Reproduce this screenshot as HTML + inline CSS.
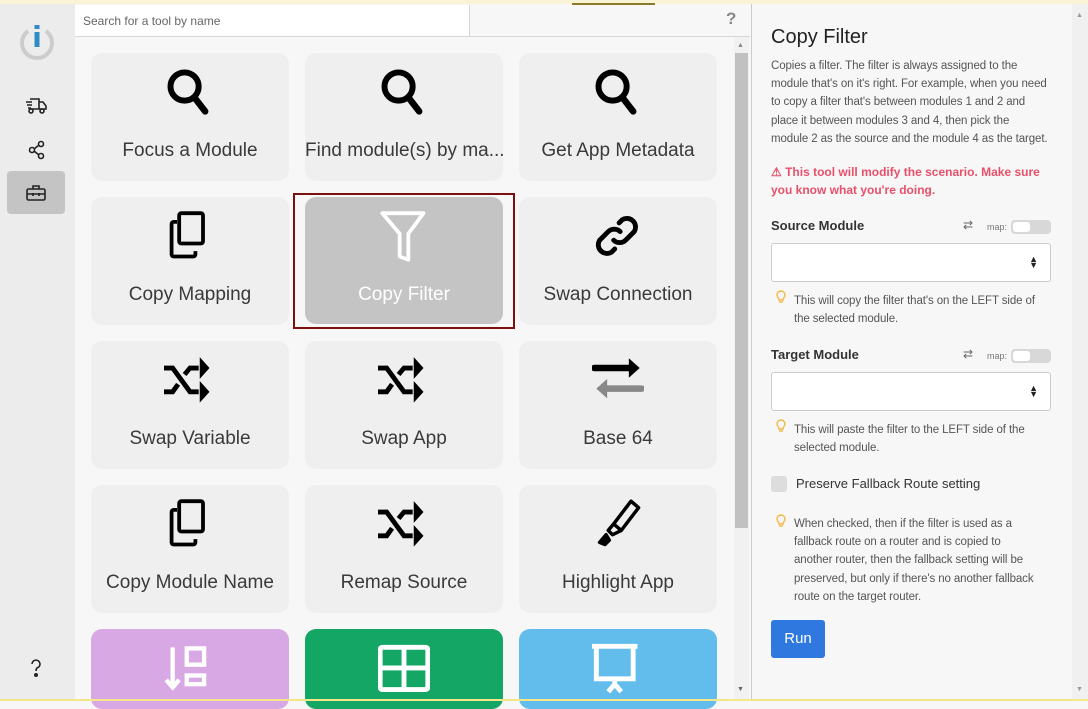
<!DOCTYPE html>
<html><head><meta charset="utf-8"><style>
*{box-sizing:border-box;margin:0;padding:0}
body{width:1088px;height:701px;overflow:hidden;background:#f7f7f7;font-family:"Liberation Sans",sans-serif;position:relative}
.topline{position:absolute;left:0;top:0;width:1088px;height:4px;background:#fbf3d6}
.botline{position:absolute;left:0;top:699px;width:1088px;height:2px;background:#f5e68a}
.side{position:absolute;left:0;top:4px;width:75px;height:695px;background:#ececec}
.main{position:absolute;left:75px;top:4px;width:675px;height:695px;background:#f7f7f7}
.search{position:absolute;left:75px;top:5px;width:395px;height:32px;background:#fff;border-bottom:1px solid #d6d6d6;border-right:1px solid #d6d6d6;font-size:12px;color:#666;padding:9px 8px}
.search2{position:absolute;left:470px;top:5px;width:280px;height:32px;border-bottom:1px solid #d6d6d6}
.card{position:absolute;width:198px;height:128px;background:#efefef;border-radius:11px;text-align:center;overflow:hidden}
.card svg{position:absolute;left:73px;top:14px}
.card span{position:absolute;left:0;right:0;top:87px;font-size:19px;color:#3a3a3a;white-space:nowrap;overflow:hidden}
.right{position:absolute;left:751px;top:4px;width:321px;height:695px;background:#f7f7f7;border-left:1px solid #ccc}
.rscroll{position:absolute;left:1072px;top:4px;width:16px;height:695px;background:#f0f0f0}
.r{position:absolute;left:771px;font-size:11.5px;line-height:18.2px;color:#555;letter-spacing:-0.1px;white-space:nowrap}
h1{position:absolute;left:771px;top:26px;font-size:20px;font-weight:normal;color:#222}
.lbl{position:absolute;left:771px;font-size:13px;font-weight:bold;color:#333}
.sel{position:absolute;left:771px;width:280px;height:39px;background:#fff;border:1px solid #ccc;border-radius:3px}
.sel i{position:absolute;right:12px;top:12px;font-style:normal;font-size:9px;line-height:6px;color:#222}
.map{position:absolute;left:987px;font-size:9px;color:#777}
.tog{position:absolute;left:1011px;width:40px;height:14px;background:#d8d8d8;border-radius:4px}
.tog:after{content:"";position:absolute;left:2px;top:2px;width:17px;height:10px;background:#fff;border-radius:3px}
.bulb{position:absolute;left:776px}
</style></head><body>
<div class="topline"></div>
<div class="side"></div>
<svg style="position:absolute;left:18px;top:23px" width="38" height="38" viewBox="0 0 38 38"><path d="M10 8 A15 15 0 1 0 28 8" fill="none" stroke="#ccc" stroke-width="4"/><rect x="16.5" y="2" width="5" height="4" fill="#2f8bc6"/><rect x="16.5" y="9" width="5" height="15" fill="#2f8bc6"/></svg>
<svg style="position:absolute;left:25px;top:96px" width="22" height="20" viewBox="0 0 22 20" fill="none" stroke="#222" stroke-width="1.6"><path d="M5 3h9v10H5M14 6h4l3 4v3h-7M1 6h6M2 9h5M3 12h3"/><circle cx="6" cy="15" r="2"/><circle cx="17" cy="15" r="2"/></svg>
<svg style="position:absolute;left:28px;top:140px" width="18" height="20" viewBox="0 0 18 20" fill="none" stroke="#222" stroke-width="1.6"><circle cx="4" cy="10" r="2.5"/><circle cx="13" cy="4" r="2.5"/><circle cx="13" cy="16" r="2.5"/><path d="M6 9l5-4M6 11l5 4"/></svg>
<div style="position:absolute;left:7px;top:171px;width:58px;height:43px;background:#c4c4c4;border-radius:4px"></div>
<svg style="position:absolute;left:26px;top:184px" width="20" height="18" viewBox="0 0 20 18" fill="none" stroke="#222" stroke-width="1.6"><rect x="1" y="5" width="18" height="11" rx="1.5"/><path d="M7 5V2h6v3M1 10h18M7 9v3M13 9v3"/></svg>
<svg style="position:absolute;left:28px;top:658px" width="16" height="20" viewBox="0 0 16 20" fill="none" stroke="#222" stroke-width="1.6"><path d="M4 6a4 4 0 1 1 5 4c-1 1-1 2-1 3"/><circle cx="8" cy="17" r="1.2" fill="#222"/></svg>

<div class="main"></div>
<div style="position:absolute;left:572px;top:3px;width:83px;height:2px;background:#8a7a2a"></div>
<div class="search">Search for a tool by name</div>
<div class="search2"></div>
<div style="position:absolute;left:726px;top:9px;font-size:17px;font-weight:bold;color:#888">?</div>
<div style="position:absolute;left:734px;top:37px;width:15px;height:662px;background:#f1f1f1"></div>
<div style="position:absolute;left:735px;top:53px;width:13px;height:475px;background:#c1c1c1"></div>
<div style="position:absolute;left:737px;top:42px;font-size:7px;color:#888">▲</div>
<div style="position:absolute;left:737px;top:686px;font-size:7px;color:#666">▼</div>

<div class="card" style="left:91px;top:53px"><svg width="52" height="52" viewBox="0 0 48 48"><circle cx="19" cy="18" r="13" fill="none" stroke="#000" stroke-width="5.5"/><path d="M28 28l10 13" stroke="#000" stroke-width="6" stroke-linecap="round"/></svg><span>Focus a Module</span></div>
<div class="card" style="left:305px;top:53px"><svg width="52" height="52" viewBox="0 0 48 48"><circle cx="19" cy="18" r="13" fill="none" stroke="#000" stroke-width="5.5"/><path d="M28 28l10 13" stroke="#000" stroke-width="6" stroke-linecap="round"/></svg><span>Find module(s) by ma...</span></div>
<div class="card" style="left:519px;top:53px"><svg width="52" height="52" viewBox="0 0 48 48"><circle cx="19" cy="18" r="13" fill="none" stroke="#000" stroke-width="5.5"/><path d="M28 28l10 13" stroke="#000" stroke-width="6" stroke-linecap="round"/></svg><span>Get App Metadata</span></div>

<div class="card" style="left:91px;top:197px"><svg width="52" height="52" viewBox="0 0 48 48" fill="none" stroke="#000" stroke-width="3.5"><rect x="14" y="2" width="22" height="28" rx="2"/><path d="M12 10h-3a2 2 0 0 0-2 2v28a2 2 0 0 0 2 2h18a2 2 0 0 0 2-2v-3"/></svg><span>Copy Mapping</span></div>
<div style="position:absolute;left:293px;top:193px;width:222px;height:136px;border:2px solid #7a1010"></div>
<div class="card" style="left:305px;top:197px;background:#c4c4c4;height:127px"><svg width="52" height="52" viewBox="0 0 48 48" fill="none" stroke="#fff" stroke-width="3.5" stroke-linejoin="round"><path d="M4 2h38l-14 19v24l-8-3V21z"/></svg><span style="color:#fff">Copy Filter</span></div>
<div class="card" style="left:519px;top:197px"><svg width="52" height="52" viewBox="0 0 48 48" fill="none" stroke="#000" stroke-width="4.5" stroke-linecap="round"><path d="M20 27a8 8 0 0 0 11 0l8-8a8 8 0 0 0-11-11l-3 3"/><path d="M26 19a8 8 0 0 0-11 0l-8 8a8 8 0 0 0 11 11l3-3"/></svg><span>Swap Connection</span></div>

<div class="card" style="left:91px;top:341px"><svg width="52" height="52" viewBox="0 0 48 48"><g fill="none" stroke="#000" stroke-width="4.5"><path d="M0 12h8l16 22h8M0 34h8l5-7M19 18l5-6h8"/></g><path d="M33 2l9 10-9 10zM33 24l9 10-9 10z" fill="#000"/></svg><span>Swap Variable</span></div>
<div class="card" style="left:305px;top:341px"><svg width="52" height="52" viewBox="0 0 48 48"><g fill="none" stroke="#000" stroke-width="4.5"><path d="M0 12h8l16 22h8M0 34h8l5-7M19 18l5-6h8"/></g><path d="M33 2l9 10-9 10zM33 24l9 10-9 10z" fill="#000"/></svg><span>Swap App</span></div>
<div class="card" style="left:519px;top:341px"><svg width="52" height="52" viewBox="0 0 48 48"><path d="M2 12h34" stroke="#000" stroke-width="6" stroke-linecap="round"/><path d="M34 3l10 9-10 9z" fill="#000"/><path d="M12 31h34" stroke="#888" stroke-width="6" stroke-linecap="round"/><path d="M14 22L4 31l10 9z" fill="#888"/></svg><span>Base 64</span></div>

<div class="card" style="left:91px;top:485px"><svg width="52" height="52" viewBox="0 0 48 48" fill="none" stroke="#000" stroke-width="3.5"><rect x="14" y="2" width="22" height="28" rx="2"/><path d="M12 10h-3a2 2 0 0 0-2 2v28a2 2 0 0 0 2 2h18a2 2 0 0 0 2-2v-3"/></svg><span>Copy Module Name</span></div>
<div class="card" style="left:305px;top:485px"><svg width="52" height="52" viewBox="0 0 48 48"><g fill="none" stroke="#000" stroke-width="4.5"><path d="M0 12h8l16 22h8M0 34h8l5-7M19 18l5-6h8"/></g><path d="M33 2l9 10-9 10zM33 24l9 10-9 10z" fill="#000"/></svg><span>Remap Source</span></div>
<div class="card" style="left:519px;top:485px"><svg width="52" height="52" viewBox="0 0 48 48" fill="none" stroke="#000" stroke-width="3.2" stroke-linejoin="round"><path d="M36 2l7 6-16 21-7-6z"/><path d="M20 23l-5 6 4 4 8-4"/><path d="M13 33l-6 7 5 2 4-4z" fill="#000"/></svg><span>Highlight App</span></div>

<div class="card" style="left:91px;top:629px;background:#d8a8e4;height:80px"><svg width="52" height="52" viewBox="0 0 48 48" fill="none" stroke="#fff" stroke-width="4"><path d="M8 4v36M2 34l6 7 6-7"/><rect x="21" y="5" width="16" height="15"/><rect x="21" y="30" width="16" height="8"/></svg></div>
<div class="card" style="left:305px;top:629px;background:#13a664;height:80px"><svg width="52" height="52" viewBox="0 0 48 48" fill="none" stroke="#fff" stroke-width="4.5"><rect x="2" y="4" width="44" height="39" rx="2"/><path d="M24 4v39M2 23h44"/></svg></div>
<div class="card" style="left:519px;top:629px;background:#63bdec;height:80px"><svg width="52" height="52" viewBox="0 0 48 48" fill="none" stroke="#fff" stroke-width="4.5"><path d="M0 3h42M4 3v30h34V3M21 33v5l-6 7M21 38l6 7"/></svg></div>

<div class="right"></div>
<div class="rscroll"><div style="position:absolute;left:4px;top:8px;font-size:7px;color:#999">▲</div><div style="position:absolute;left:4px;top:682px;font-size:7px;color:#999">▼</div></div>
<h1>Copy Filter</h1>
<div class="r" style="top:57px">Copies a filter. The filter is always assigned to the<br>module that's on it's right. For example, when you need<br>to copy a filter that's between modules 1 and 2 and<br>place it between modules 3 and 4, then pick the<br>module 2 as the source and the module 4 as the target.</div>
<div class="r" style="top:163px;font-size:12px;font-weight:bold;color:#e8506a;letter-spacing:0">⚠ This tool will modify the scenario. Make sure<br>you know what you're doing.</div>
<div class="lbl" style="top:218px">Source Module</div>
<div style="position:absolute;left:963px;top:218px;font-size:12px;color:#666">⇄</div>
<div class="map" style="top:222px">map:</div><div class="tog" style="top:220px"></div>
<div class="sel" style="top:243px"><i>▲<br>▼</i></div>
<svg class="bulb" style="top:290px" width="10" height="14" viewBox="0 0 10 14" fill="none" stroke="#f3b846" stroke-width="1.4"><path d="M3 10C3 8 1 7 1 5a4 4 0 0 1 8 0c0 2-2 3-2 5z"/><path d="M3 12h4"/></svg>
<div class="r" style="left:794px;top:292px">This will copy the filter that's on the LEFT side of<br>the selected module.</div>
<div class="lbl" style="top:347px">Target Module</div>
<div style="position:absolute;left:963px;top:347px;font-size:12px;color:#666">⇄</div>
<div class="map" style="top:351px">map:</div><div class="tog" style="top:349px"></div>
<div class="sel" style="top:372px"><i>▲<br>▼</i></div>
<svg class="bulb" style="top:419px" width="10" height="14" viewBox="0 0 10 14" fill="none" stroke="#f3b846" stroke-width="1.4"><path d="M3 10C3 8 1 7 1 5a4 4 0 0 1 8 0c0 2-2 3-2 5z"/><path d="M3 12h4"/></svg>
<div class="r" style="left:794px;top:421px">This will paste the filter to the LEFT side of the<br>selected module.</div>
<div style="position:absolute;left:771px;top:476px;width:16px;height:16px;background:#ddd;border-radius:3px"></div>
<div style="position:absolute;left:796px;top:476px;font-size:13px;color:#333">Preserve Fallback Route setting</div>
<svg class="bulb" style="top:514px" width="10" height="14" viewBox="0 0 10 14" fill="none" stroke="#f3b846" stroke-width="1.4"><path d="M3 10C3 8 1 7 1 5a4 4 0 0 1 8 0c0 2-2 3-2 5z"/><path d="M3 12h4"/></svg>
<div class="r" style="left:794px;top:515px">When checked, then if the filter is used as a<br>fallback route on a router and is copied to<br>another router, then the fallback setting will be<br>preserved, but only if there's no another fallback<br>route on the target router.</div>
<div style="position:absolute;left:771px;top:620px;width:54px;height:38px;background:#2e78df;border-radius:3px;color:#fff;font-size:15px;text-align:center;line-height:38px">Run</div>
<div class="botline"></div>
</body></html>
